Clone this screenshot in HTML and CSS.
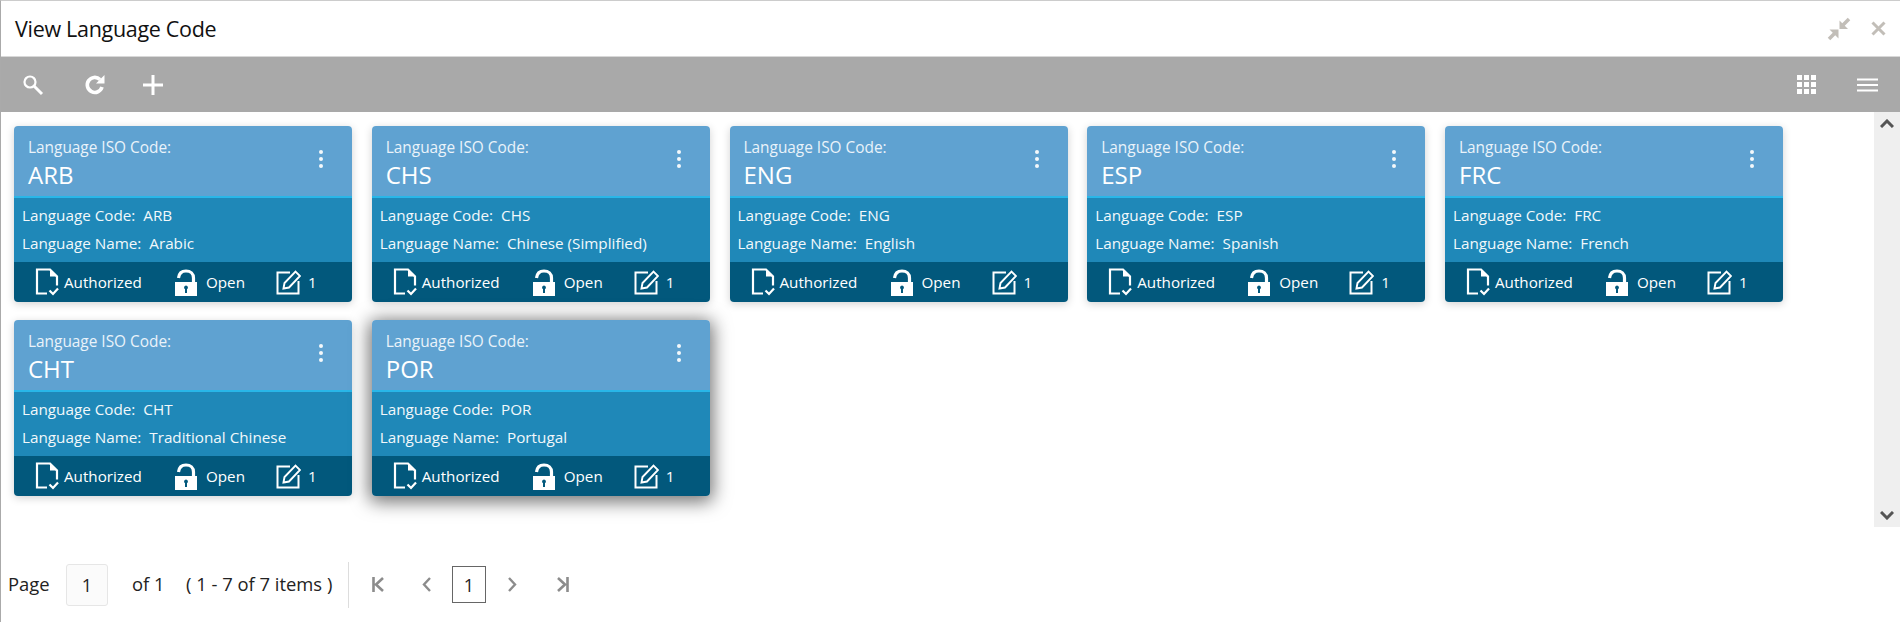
FILE: index.html
```html
<!DOCTYPE html>
<html lang="en">
<head>
<meta charset="utf-8">
<title>View Language Code</title>
<link rel="stylesheet" href="styles.css">
</head>
<body>
<svg class="defs" width="0" height="0" aria-hidden="true">
  <symbol id="i-doc" viewBox="0 0 24 28">
    <path d="M12 25.500H2V1.500h13l7 7v9" fill="none" stroke="currentColor" stroke-width="2.200"/>
    <path d="M15 2v6.500h6.500z" fill="currentColor"/>
    <path d="M14.500 22.500l3.500 3.500 5-5.500" fill="none" stroke="currentColor" stroke-width="2.200"/>
  </symbol>
  <symbol id="i-lock" viewBox="0 0 24 27">
    <path d="M4.500 9C5 4.500 8 2 12 2c4.500 0 7.500 3 7.500 7v5" fill="none" stroke="currentColor" stroke-width="3.200"/>
    <path d="M1 13h22v14H1z" fill="currentColor"/>
    <path d="M12 16.500a2 2 0 0 1 1 3.700V24h-2v-3.800a2 2 0 0 1 1-3.700z" fill="#02587c"/>
  </symbol>
  <symbol id="i-edit" viewBox="0 0 25 25">
    <path d="M22.500 11v12.500H1.500V2.500H14" fill="none" stroke="currentColor" stroke-width="2"/>
    <path d="M7.500 18.500l1-5.500L19.500 1.500l4.500 4.500L13 17.500z" fill="none" stroke="currentColor" stroke-width="1.900"/>
  </symbol>
  <symbol id="i-dots" viewBox="0 0 6 20">
    <circle cx="3" cy="3" r="2" fill="currentColor"/><circle cx="3" cy="10" r="2" fill="currentColor"/><circle cx="3" cy="17" r="2" fill="currentColor"/>
  </symbol>
</svg>
<main class="window">
  <header class="titlebar">
    <h1 class="title">View Language Code</h1>
    <div class="winctl">
      <svg width="24" height="24" viewBox="0 0 24 24"><path d="M22 2l-6 6" stroke="#c2beb8" stroke-width="3.500"/><path d="M12.500 3.500v8.500H21z" fill="#c2beb8"/><path d="M2 22l6-6" stroke="#c2beb8" stroke-width="3.500"/><path d="M2.500 12.500h9v9z" fill="#c2beb8"/></svg>
      <svg width="15" height="15" viewBox="0 0 15 15"><path d="M1.500 1.500l12 12M13.500 1.500l-12 12" stroke="#c2beb8" stroke-width="3"/></svg>
    </div>
  </header>
  <nav class="toolbar">
    <div class="tools">
      <svg width="22" height="22" viewBox="0 0 22 22"><circle cx="8" cy="8" r="5.500" fill="none" stroke="#fff" stroke-width="2.200"/><path d="M12 12l8 8" stroke="#fff" stroke-width="3"/></svg>
      <svg class="tool-refresh" width="22" height="22" viewBox="0 0 22 22"><path d="M18 13a7.500 7.500 0 1 1-2-7.500" fill="none" stroke="#fff" stroke-width="3.600"/><path d="M20.500 1v8.500H12z" fill="#fff"/></svg>
      <svg width="22" height="22" viewBox="0 0 22 22"><path d="M11 1v20M1 11h20" stroke="#fff" stroke-width="3"/></svg>
    </div>
    <div class="views">
      <svg width="19" height="19" viewBox="0 0 19 19"><path d="M0 0h5v5H0zM7 0h5v5H7zM14 0h5v5h-5zM0 7h5v5H0zM7 7h5v5H7zM14 7h5v5h-5zM0 14h5v5H0zM7 14h5v5H7zM14 14h5v5h-5z" fill="#fff"/></svg>
      <svg width="21" height="14" viewBox="0 0 21 14"><path d="M0 1.500h21M0 7h21M0 12.500h21" stroke="#fff" stroke-width="2"/></svg>
    </div>
  </nav>
  <div class="content">
    <section class="grid">
      <article class="card">
        <div class="card-head"><div><div class="iso-label">Language ISO Code:</div><div class="iso-value">ARB</div></div><svg class="dots" width="6" height="20"><use href="#i-dots"/></svg></div>
        <div class="card-body"><div>Language Code:&nbsp; ARB</div><div>Language Name:&nbsp; Arabic</div></div>
        <div class="card-foot"><span class="f-a"><svg width="24" height="28"><use href="#i-doc"/></svg>Authorized</span><span class="f-b"><svg width="24" height="27"><use href="#i-lock"/></svg>Open</span><span class="f-c"><svg width="25" height="25"><use href="#i-edit"/></svg>1</span></div>
      </article>
      <article class="card">
        <div class="card-head"><div><div class="iso-label">Language ISO Code:</div><div class="iso-value">CHS</div></div><svg class="dots" width="6" height="20"><use href="#i-dots"/></svg></div>
        <div class="card-body"><div>Language Code:&nbsp; CHS</div><div>Language Name:&nbsp; Chinese (Simplified)</div></div>
        <div class="card-foot"><span class="f-a"><svg width="24" height="28"><use href="#i-doc"/></svg>Authorized</span><span class="f-b"><svg width="24" height="27"><use href="#i-lock"/></svg>Open</span><span class="f-c"><svg width="25" height="25"><use href="#i-edit"/></svg>1</span></div>
      </article>
      <article class="card">
        <div class="card-head"><div><div class="iso-label">Language ISO Code:</div><div class="iso-value">ENG</div></div><svg class="dots" width="6" height="20"><use href="#i-dots"/></svg></div>
        <div class="card-body"><div>Language Code:&nbsp; ENG</div><div>Language Name:&nbsp; English</div></div>
        <div class="card-foot"><span class="f-a"><svg width="24" height="28"><use href="#i-doc"/></svg>Authorized</span><span class="f-b"><svg width="24" height="27"><use href="#i-lock"/></svg>Open</span><span class="f-c"><svg width="25" height="25"><use href="#i-edit"/></svg>1</span></div>
      </article>
      <article class="card">
        <div class="card-head"><div><div class="iso-label">Language ISO Code:</div><div class="iso-value">ESP</div></div><svg class="dots" width="6" height="20"><use href="#i-dots"/></svg></div>
        <div class="card-body"><div>Language Code:&nbsp; ESP</div><div>Language Name:&nbsp; Spanish</div></div>
        <div class="card-foot"><span class="f-a"><svg width="24" height="28"><use href="#i-doc"/></svg>Authorized</span><span class="f-b"><svg width="24" height="27"><use href="#i-lock"/></svg>Open</span><span class="f-c"><svg width="25" height="25"><use href="#i-edit"/></svg>1</span></div>
      </article>
      <article class="card">
        <div class="card-head"><div><div class="iso-label">Language ISO Code:</div><div class="iso-value">FRC</div></div><svg class="dots" width="6" height="20"><use href="#i-dots"/></svg></div>
        <div class="card-body"><div>Language Code:&nbsp; FRC</div><div>Language Name:&nbsp; French</div></div>
        <div class="card-foot"><span class="f-a"><svg width="24" height="28"><use href="#i-doc"/></svg>Authorized</span><span class="f-b"><svg width="24" height="27"><use href="#i-lock"/></svg>Open</span><span class="f-c"><svg width="25" height="25"><use href="#i-edit"/></svg>1</span></div>
      </article>
      <article class="card">
        <div class="card-head"><div><div class="iso-label">Language ISO Code:</div><div class="iso-value">CHT</div></div><svg class="dots" width="6" height="20"><use href="#i-dots"/></svg></div>
        <div class="card-body"><div>Language Code:&nbsp; CHT</div><div>Language Name:&nbsp; Traditional Chinese</div></div>
        <div class="card-foot"><span class="f-a"><svg width="24" height="28"><use href="#i-doc"/></svg>Authorized</span><span class="f-b"><svg width="24" height="27"><use href="#i-lock"/></svg>Open</span><span class="f-c"><svg width="25" height="25"><use href="#i-edit"/></svg>1</span></div>
      </article>
      <article class="card card-hover">
        <div class="card-head"><div><div class="iso-label">Language ISO Code:</div><div class="iso-value">POR</div></div><svg class="dots" width="6" height="20"><use href="#i-dots"/></svg></div>
        <div class="card-body"><div>Language Code:&nbsp; POR</div><div>Language Name:&nbsp; Portugal</div></div>
        <div class="card-foot"><span class="f-a"><svg width="24" height="28"><use href="#i-doc"/></svg>Authorized</span><span class="f-b"><svg width="24" height="27"><use href="#i-lock"/></svg>Open</span><span class="f-c"><svg width="25" height="25"><use href="#i-edit"/></svg>1</span></div>
      </article>
    </section>
    <aside class="scrollbar">
      <svg width="14" height="9" viewBox="0 0 14 9"><path d="M1 8l6-6 6 6" fill="none" stroke="#555" stroke-width="3"/></svg>
      <svg width="14" height="9" viewBox="0 0 14 9"><path d="M1 1l6 6 6-6" fill="none" stroke="#555" stroke-width="3"/></svg>
    </aside>
  </div>
  <footer class="pager">
    <span class="p-page">Page</span>
    <span class="p-input">1</span>
    <span class="p-of">of 1</span>
    <span class="p-items">( 1 - 7 of 7 items )</span>
    <span class="p-sep"></span>
    <svg class="p-first" width="12" height="15" viewBox="0 0 12 15"><path d="M1.500 0v15M11 1L4 7.500l7 6.500" fill="none" stroke="#8c8c8c" stroke-width="2.600"/></svg>
    <svg class="p-prev" width="9" height="15" viewBox="0 0 9 15"><path d="M8 1L2 7.500 8 14" fill="none" stroke="#8c8c8c" stroke-width="2.400"/></svg>
    <span class="p-current">1</span>
    <svg class="p-next" width="9" height="15" viewBox="0 0 9 15"><path d="M1 1l6 6.500L1 14" fill="none" stroke="#8c8c8c" stroke-width="2.400"/></svg>
    <svg class="p-last" width="12" height="15" viewBox="0 0 12 15"><path d="M10.500 0v15M1 1l7 6.500L1 14" fill="none" stroke="#8c8c8c" stroke-width="2.600"/></svg>
  </footer>
</main>
</body>
</html>
```
FILE: styles.css
```css
* { box-sizing: border-box; }
html, body { margin: 0; height: 100%; background: #fff; overflow: hidden; }
body { font-family: "Open Sans", "Noto Sans", sans-serif; color: #111; }
.defs { display: block; height: 0; }
.window { height: 622px; border-top: 1px solid #ccc; border-left: 1px solid #aaa; display: flex; flex-direction: column; }
.titlebar { height: 56px; display: flex; align-items: center; justify-content: space-between; padding: 0 14px 0 14px; border-bottom: 1px solid #d8d8d8; flex: none; }
.title { margin: 0; font-size: 21.500px; font-weight: 400; letter-spacing: -0.300px; color: #111; }
.winctl { display: flex; align-items: center; gap: 20px; }
.toolbar { height: 55px; background: #a9a9a9; display: flex; align-items: center; justify-content: space-between; padding: 0 22px 0 21px; flex: none; }
.tools { display: flex; align-items: center; gap: 36px; }
.tool-refresh { margin-left: 4px; }
.views { display: flex; align-items: center; gap: 41px; }
.content { height: 415px; display: flex; flex: none; }
.grid { flex: 1; display: grid; grid-template-columns: repeat(5, 338px); grid-auto-rows: 176px; gap: 18px 19.750px; padding: 14px 0 0 13px; align-content: start; }
.card { border-radius: 4px; overflow: hidden; color: #fff; display: flex; flex-direction: column; box-shadow: 0 2px 8px rgba(0,0,0,.18); }
.card-hover { box-shadow: 0 3px 18px 3px rgba(0,0,0,.55); }
.card-head { height: 72px; background: #5fa2d1; border-bottom: 2px solid #29b6e8; padding: 12px 28px 0 14px; display: flex; justify-content: space-between; align-items: flex-start; }
.iso-label { font-size: 15.400px; line-height: 20px; color: #eaf3fa; }
.iso-value { font-size: 24px; line-height: 33px; }
.dots { margin-top: 11px; color: #f4f8fb; }
.card-body { height: 64px; background: #1f88b8; padding: 3px 8px 0; font-size: 15.250px; line-height: 28px; color: #f2f8fb; }
.card-foot { height: 40px; background: #02587c; display: flex; align-items: center; font-size: 15.200px; }
.card-foot span { display: flex; align-items: center; }
.f-a { width: 160px; padding-left: 21px; gap: 5px; }
.f-b { width: 102px; gap: 8px; }
.f-c { gap: 7px; }
.scrollbar { width: 26px; background: #efefef; display: flex; flex-direction: column; align-items: center; justify-content: space-between; padding: 7px 0; }
.pager { flex: 1; display: flex; align-items: center; font-size: 18.400px; color: #222; padding-top: 20px; }
.p-page { margin-left: 7px; width: 58px; padding-bottom: 3px; }
.p-input { width: 42px; height: 42px; border: 1px solid #e6e6e6; border-radius: 3px; background: #fbfbfb; display: flex; align-items: center; justify-content: center; font-size: 18px; }
.p-of { margin-left: 24px; width: 54px; padding-bottom: 3px; }
.p-items { width: 162px; white-space: nowrap; padding-bottom: 3px; }
.p-sep { width: 1px; height: 46px; background: #ddd; }
.p-first { margin-left: 23px; }
.p-prev { margin-left: 38px; }
.p-current { width: 34px; height: 37px; margin-left: 21px; border: 1px solid #666; display: flex; align-items: center; justify-content: center; font-size: 18px; }
.p-next { margin-left: 22px; }
.p-last { margin-left: 40px; }
```
